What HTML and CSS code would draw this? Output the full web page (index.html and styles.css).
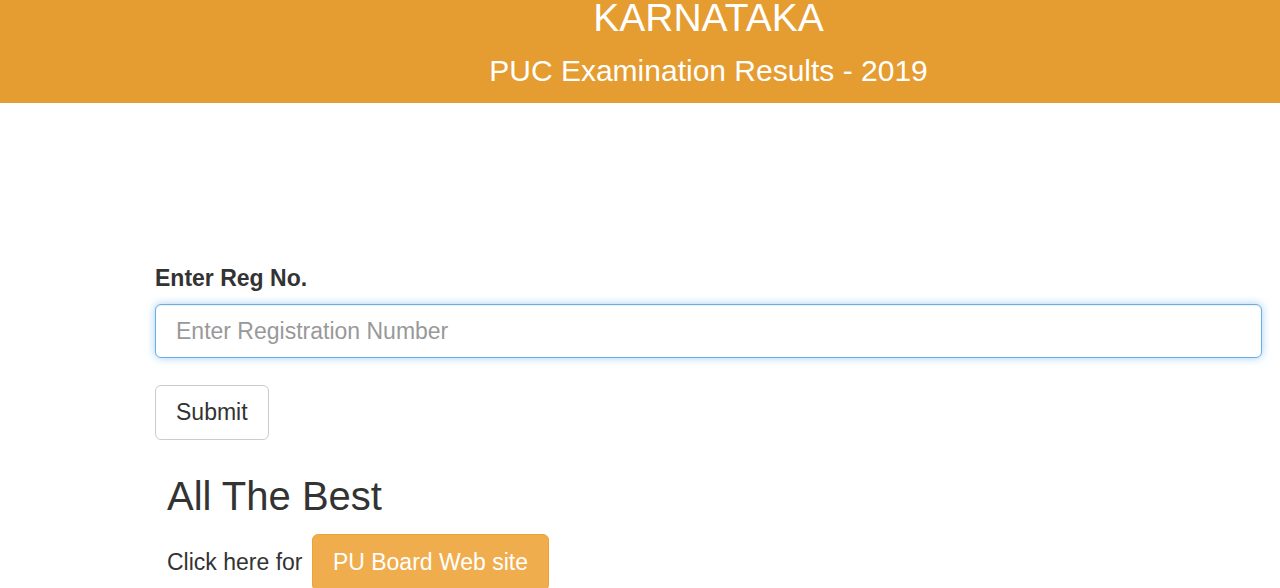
FILE: index.html
```html
<!DOCTYPE html>
<html lang="en">
<head>
<meta charset="utf-8">
<title>KARNATAKA PUC Examination Results - 2019</title>
<link rel="stylesheet" href="styles.css">
</head>
<body>
<header class="banner">
  <div class="wrap">
    <h1 class="state">KARNATAKA</h1>
    <h2 class="subtitle">PUC Examination Results - 2019</h2>
  </div>
</header>
<main class="wrap content">
  <form class="reg-form" onsubmit="return false;">
    <label class="field-label" for="regno">Enter Reg No.</label>
    <input class="field-input" id="regno" type="text" placeholder="Enter Registration Number" autofocus>
    <button class="btn btn-default" type="submit">Submit</button>
  </form>
  <div class="extra">
    <h3 class="best">All The Best</h3>
    <p class="link-row">Click here for <a class="btn btn-warning" href="#">PU Board Web site</a></p>
  </div>
</main>
</body>
</html>
```

FILE: styles.css
```css
* { box-sizing: border-box; }
html, body { margin: 0; padding: 0; background: #fff; }
body {
  font-family: "Liberation Sans", Arial, sans-serif;
  color: #333;
  font-size: 23px;
  overflow: hidden;
}
.wrap {
  padding: 0 18px 0 155px;
}
.banner {
  background: #e59c30;
  height: 103px;
  color: #fff;
  text-align: center;
  overflow: hidden;
}
.state {
  margin: 0;
  font-size: 39px;
  line-height: 36px;
  font-weight: normal;
}
.subtitle {
  margin: 18px 0 0;
  font-size: 30px;
  line-height: 33px;
  font-weight: normal;
}
.content { padding-top: 161px; }
.reg-form { display: flex; flex-direction: column; align-items: flex-start; }
.field-label {
  display: block;
  font-weight: bold;
  font-size: 23px;
  line-height: 28px;
  margin-bottom: 12px;
}
.field-input {
  display: block;
  width: 100%;
  height: 54px;
  padding: 10px 20px;
  font-family: inherit;
  font-size: 23px;
  line-height: 32px;
  color: #555;
  background: #fff;
  border: 1px solid #66afe9;
  border-radius: 6px;
  outline: 0;
  box-shadow: inset 0 1px 1px rgba(0,0,0,.075), 0 0 8px rgba(102,175,233,.6);
}
.field-input::placeholder { color: #999; }
.btn {
  display: inline-block;
  font-family: inherit;
  font-size: 23px;
  line-height: 33px;
  padding: 10px 20px;
  border: 1px solid transparent;
  border-radius: 6px;
  text-decoration: none;
  cursor: pointer;
}
.btn-default {
  margin-top: 27px;
  color: #333;
  background: #fff;
  border-color: #ccc;
}
.extra { padding-left: 12px; }
.best {
  margin: 34px 0 0;
  font-size: 40px;
  line-height: 44px;
  font-weight: normal;
}
.link-row {
  margin: 16px 0 0;
  line-height: 57px;
}
.btn-warning {
  color: #fff;
  background: #f0ad4e;
  border-color: #eea236;
  padding: 11px 20px;
  margin-left: 3px;
  vertical-align: top;
}
```
